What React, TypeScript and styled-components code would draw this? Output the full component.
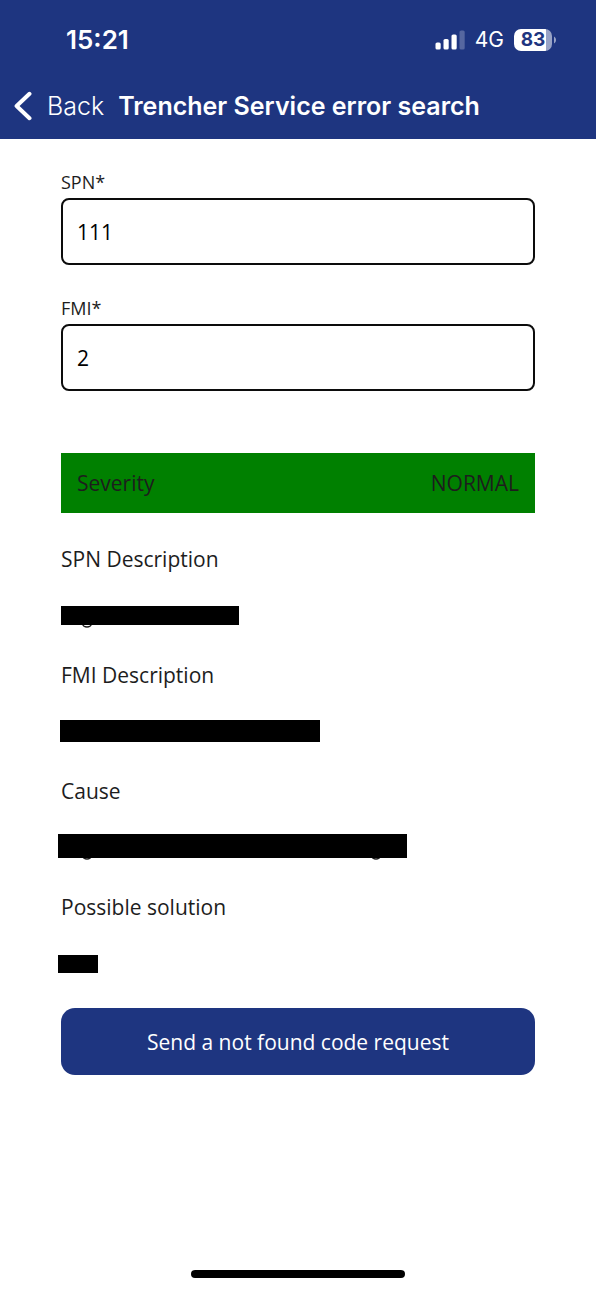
import React, { useState } from "react";
import styled, { createGlobalStyle } from "styled-components";

const navy = "#1e3580";
const systemFont = `Inter, "Liberation Sans", sans-serif`;
const bodyFont = `"Open Sans", "Noto Sans", sans-serif`;

const GlobalStyle = createGlobalStyle`
  *, *::before, *::after { box-sizing: border-box; }
  body { margin: 0; background: #fff; }
`;

const Screen = styled.div`
  display: flex;
  flex-direction: column;
  min-height: 100vh;
  color: #1d1d1d;
  font-family: ${bodyFont};
  font-size: 21px;
  line-height: 30px;
`;

const Header = styled.header`
  background: ${navy};
  color: #fff;
  font-family: ${systemFont};
`;

const StatusBar = styled.div`
  display: flex;
  align-items: center;
  justify-content: space-between;
  height: 72px;
  padding: 8px 40px 0 66px;
`;

const Clock = styled.time`
  font-size: 26px;
  font-weight: 600;
`;

const Indicators = styled.div`
  display: flex;
  align-items: center;
  gap: 10px;
`;

const Network = styled.span`
  font-size: 21px;
`;

const Battery = styled.div`
  display: flex;
  align-items: center;
  gap: 2px;
`;

const BatteryCell = styled.span`
  display: flex;
  align-items: center;
  justify-content: center;
  width: 38px;
  height: 22px;
  border-radius: 7px;
  background: linear-gradient(to right, #fff 83%, #98a3c6 83%);
  color: ${navy};
  font-size: 19px;
  font-weight: 700;
`;

const NavBar = styled.nav`
  display: flex;
  align-items: center;
  gap: 14px;
  height: 67px;
  padding: 0 14px;
`;

const BackLink = styled.a`
  display: flex;
  align-items: center;
  gap: 15px;
  color: inherit;
  font-size: 25px;
  font-weight: 300;
  text-decoration: none;
`;

const Title = styled.h1`
  margin: 0;
  font-size: 25px;
  font-weight: 600;
  white-space: nowrap;
`;

const Content = styled.main`
  flex: 1;
  padding: 32px 61px 0;
`;

const Field = styled.div`
  display: flex;
  flex-direction: column;
  gap: 4px;
  margin-bottom: 32px;
`;

const Label = styled.label`
  font-size: 18px;
  line-height: 23px;
`;

const TextInput = styled.input`
  width: 100%;
  height: 67px;
  padding: 0 14px;
  border: 2px solid #0c0c0c;
  border-radius: 8px;
  background: #fff;
  color: #000;
  font: inherit;
`;

const Severity = styled.div`
  display: flex;
  align-items: center;
  justify-content: space-between;
  height: 60px;
  margin-top: 62px;
  padding: 0 16px;
  background: #008000;
`;

const Details = styled.dl`
  margin: 17px 0 0;
`;

const Term = styled.dt`
  display: flex;
  align-items: center;
  height: 58px;
`;

const Value = styled.dd`
  height: 58px;
  margin: 0;
`;

const Mask = styled.svg`
  display: block;
  width: 100%;
  height: 58px;
  overflow: visible;
`;

const SubmitButton = styled.button`
  display: block;
  width: 100%;
  height: 67px;
  margin-top: 14px;
  border: 0;
  border-radius: 14px;
  background: ${navy};
  color: #fff;
  font: inherit;
`;

const HomeArea = styled.footer`
  display: flex;
  justify-content: center;
  padding: 12px 0;
`;

const HomeIndicator = styled.span`
  width: 36%;
  height: 8px;
  border-radius: 4px;
  background: #000;
`;

type Detail = {
  term: string;
  bar: { x: number; y: number; width: number; height: number };
  tails: number[];
};

const details: Detail[] = [
  { term: "SPN Description", bar: { x: 0, y: 18, width: 178, height: 19 }, tails: [26] },
  { term: "FMI Description", bar: { x: -1, y: 16, width: 260, height: 22 }, tails: [] },
  { term: "Cause", bar: { x: -3, y: 14, width: 349, height: 24 }, tails: [26, 315] },
  { term: "Possible solution", bar: { x: -3, y: 19, width: 40, height: 18 }, tails: [] },
];

function HiddenValue({ bar, tails }: Pick<Detail, "bar" | "tails">) {
  return (
    <Mask role="img" aria-label="Hidden value">
      {tails.map((x) => (
        <ellipse key={x} cx={x} cy="36" rx="4.2" ry="3" fill="none" stroke="#1d1d1d" strokeWidth="1.5" />
      ))}
      <rect {...bar} />
    </Mask>
  );
}

function TextField({ id, label, initial }: { id: string; label: string; initial: string }) {
  const [value, setValue] = useState(initial);
  return (
    <Field>
      <Label htmlFor={id}>{label}</Label>
      <TextInput id={id} value={value} inputMode="numeric" required onChange={(e) => setValue(e.target.value)} />
    </Field>
  );
}

export default function App() {
  return (
    <Screen>
      <GlobalStyle />
      <Header>
        <StatusBar>
          <Clock>15:21</Clock>
          <Indicators>
            <svg width="30" height="20" viewBox="0 0 30 20" fill="#fff" aria-hidden="true">
              <rect x="0.5" y="12.5" width="5.2" height="7" rx="1.6" />
              <rect x="8.5" y="9" width="5.2" height="10.5" rx="1.6" />
              <rect x="16.5" y="4.5" width="5.2" height="15" rx="1.6" />
              <rect x="24.5" y="0.5" width="5.2" height="19" rx="1.6" opacity="0.25" />
            </svg>
            <Network>4G</Network>
            <Battery>
              <BatteryCell>83</BatteryCell>
              <svg width="2" height="8" viewBox="0 0 2 8" aria-hidden="true">
                <path d="M0 0.5C1.3 1.2 2 2.5 2 4S1.3 6.8 0 7.5Z" fill="#98a3c6" />
              </svg>
            </Battery>
          </Indicators>
        </StatusBar>
        <NavBar>
          <BackLink href="#back">
            <svg width="18" height="30" viewBox="0 0 18 30" fill="none" aria-hidden="true">
              <path d="M15.5 2.8L2.6 15L15.5 27.2" stroke="#fff" strokeWidth="4" strokeLinecap="round" strokeLinejoin="round" />
            </svg>
            Back
          </BackLink>
          <Title>Trencher Service error search</Title>
        </NavBar>
      </Header>
      <Content>
        <TextField id="spn" label="SPN*" initial="111" />
        <TextField id="fmi" label="FMI*" initial="2" />
        <Severity>
          <span>Severity</span>
          <span>NORMAL</span>
        </Severity>
        <Details>
          {details.map(({ term, bar, tails }) => (
            <div key={term}>
              <Term>{term}</Term>
              <Value>
                <HiddenValue bar={bar} tails={tails} />
              </Value>
            </div>
          ))}
        </Details>
        <SubmitButton type="button">Send a not found code request</SubmitButton>
      </Content>
      <HomeArea>
        <HomeIndicator />
      </HomeArea>
    </Screen>
  );
}
